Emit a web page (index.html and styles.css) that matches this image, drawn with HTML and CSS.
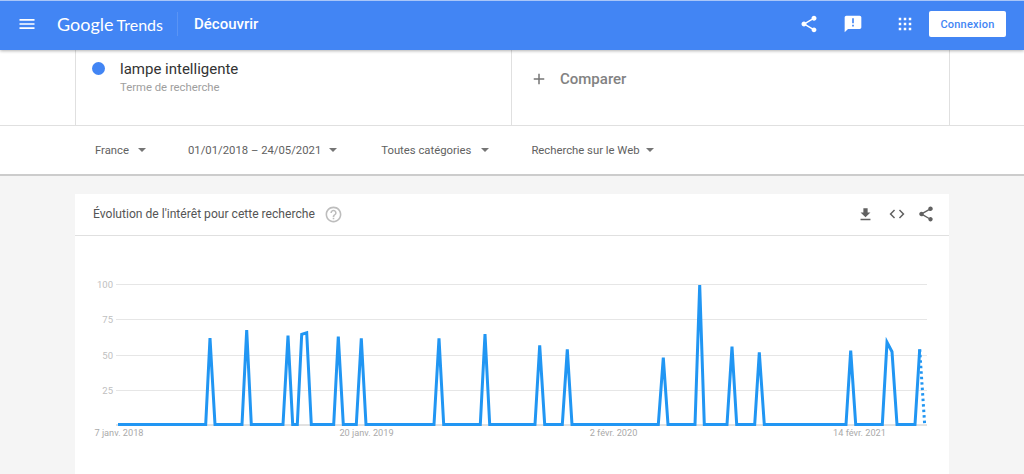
FILE: index.html
```html
<!DOCTYPE HTML>
<html>
<head>
<meta charset="utf-8">
<title>Google Trends</title>
<link rel="stylesheet" href="styles.css">
</head>
<body>

<div class="header">
  <svg class="menu-icon" viewBox="0 0 24 24"><path d="M3 18h18v-2H3v2zm0-5h18v-2H3v2zm0-7v2h18V6H3z"/></svg>
  <a href="#" class="logo"><span class="logo-google">Google</span><span class="logo-trends">Trends</span></a>
  <a href="#" class="page-name">Découvrir</a>
  <div class="header-right">
    <svg class="top-icon share" viewBox="0 0 24 24"><path d="M18 16.08c-.76 0-1.44.3-1.96.77L8.91 12.7c.05-.23.09-.46.09-.7s-.04-.47-.09-.7l7.05-4.11c.54.5 1.25.81 2.04.81 1.66 0 3-1.34 3-3s-1.34-3-3-3-3 1.34-3 3c0 .24.04.47.09.7L8.04 9.81C7.5 9.31 6.79 9 6 9c-1.66 0-3 1.34-3 3s1.34 3 3 3c.79 0 1.5-.31 2.04-.81l7.12 4.16c-.05.21-.08.43-.08.65 0 1.61 1.31 2.92 2.92 2.92 1.61 0 2.92-1.31 2.92-2.92s-1.31-2.92-2.92-2.92z"/></svg>
    <svg class="top-icon feedback" viewBox="0 0 24 24"><path d="M20 2H4c-1.1 0-1.99.9-1.99 2L2 22l4-4h14c1.1 0 2-.9 2-2V4c0-1.1-.9-2-2-2zm-7 9h-2V5h2v6zm0 4h-2v-2h2v2z"/></svg>
    <svg class="top-icon apps" viewBox="0 0 24 24"><path d="M4.5 4.5h3v3h-3zm6 0h3v3h-3zm6 0h3v3h-3zm-12 6h3v3h-3zm6 0h3v3h-3zm6 0h3v3h-3zm-12 6h3v3h-3zm6 0h3v3h-3zm6 0h3v3h-3z"/></svg>
    <button type="button" class="login-btn">Connexion</button>
  </div>
</div>

<div class="search-row">
  <div class="terms">
    <div class="term">
      <span class="dot"></span>
      <div>
        <div class="term-name">lampe intelligente</div>
        <div class="term-type">Terme de recherche</div>
      </div>
    </div>
    <div class="compare">
      <svg class="plus" viewBox="0 0 24 24"><path d="M19 13h-6v6h-2v-6H5v-2h6V5h2v6h6v2z"/></svg>
      <span>Comparer</span>
    </div>
  </div>
</div>

<div class="filters">
  <div class="filter filter-country">France<span class="caret"></span></div>
  <div class="filter filter-date">01/01/2018 – 24/05/2021<span class="caret"></span></div>
  <div class="filter filter-cat">Toutes catégories<span class="caret"></span></div>
  <div class="filter filter-web">Recherche sur le Web<span class="caret"></span></div>
</div>

<div class="content">
  <div class="card">
    <div class="card-head">
      <span class="card-title">Évolution de l'intérêt pour cette recherche</span>
      <svg class="help" viewBox="0 0 24 24"><path d="M11 18h2v-2h-2v2zm1-16C6.48 2 2 6.48 2 12s4.48 10 10 10 10-4.48 10-10S17.52 2 12 2zm0 18c-4.41 0-8-3.59-8-8s3.59-8 8-8 8 3.59 8 8-3.59 8-8 8zm0-14c-2.21 0-4 1.79-4 4h2c0-1.1.9-2 2-2s2 .9 2 2c0 2-3 1.75-3 5h2c0-2.25 3-2.5 3-5 0-2.21-1.79-4-4-4z"/></svg>
      <div class="card-tools">
        <svg class="tool tool-dl" viewBox="0 0 24 24"><path d="M19 9h-4V3H9v6H5l7 7 7-7zM5 18v2h14v-2H5z"/></svg>
        <svg class="tool tool-code" viewBox="0 0 24 24"><path d="M9.4 16.6L4.8 12l4.6-4.6L8 6l-6 6 6 6 1.4-1.4zm5.2 0l4.6-4.6-4.6-4.6L16 6l6 6-6 6-1.4-1.4z"/></svg>
        <svg class="tool tool-share" viewBox="0 0 24 24"><path d="M18 16.08c-.76 0-1.44.3-1.96.77L8.91 12.7c.05-.23.09-.46.09-.7s-.04-.47-.09-.7l7.05-4.11c.54.5 1.25.81 2.04.81 1.66 0 3-1.34 3-3s-1.34-3-3-3-3 1.34-3 3c0 .24.04.47.09.7L8.04 9.81C7.5 9.31 6.79 9 6 9c-1.66 0-3 1.34-3 3s1.34 3 3 3c.79 0 1.5-.31 2.04-.81l7.12 4.16c-.05.21-.08.43-.08.65 0 1.61 1.31 2.92 2.92 2.92 1.61 0 2.92-1.31 2.92-2.92s-1.31-2.92-2.92-2.92z"/></svg>
      </div>
    </div>
    <svg class="chart" viewBox="75 236 874 238">
      <g class="grid">
        <line x1="116" x2="927" y1="284.5" y2="284.5"/>
        <line x1="116" x2="927" y1="319.5" y2="319.5"/>
        <line x1="116" x2="927" y1="355.5" y2="355.5"/>
        <line x1="116" x2="927" y1="390.5" y2="390.5"/>
      </g>
      <line class="axis" x1="116" x2="927" y1="425" y2="425"/>
      <g class="y-labels">
        <text x="113" y="288">100</text>
        <text x="113" y="323">75</text>
        <text x="113" y="359">50</text>
        <text x="113" y="394">25</text>
      </g>
      <g class="x-labels">
        <text x="119" y="436">7 janv. 2018</text>
        <text x="366.5" y="436">20 janv. 2019</text>
        <text x="613.5" y="436">2 févr. 2020</text>
        <text x="859.5" y="436">14 févr. 2021</text>
      </g>
      <polyline class="trend" points="118,424.5 205.7,424.5 210,338 215,424.5 242,424.5 246.7,330 251.3,424.5 283,424.5 288,335.7 292.7,424.5 297.3,424.5 301.7,334.3 306.7,332.7 311.3,424.5 333.7,424.5 338.3,336.7 343.3,424.5 356.3,424.5 361.3,338.3 366,424.5 434,424.5 439,338.3 443.7,424.5 480.3,424.5 485,334 489.7,424.5 535,424.5 539.7,345.3 544.7,424.5 562.3,424.5 567.3,349.3 572,424.5 658.3,424.5 663.3,357.7 668,424.5 695,424.5 699.7,285 704.3,424.5 727,424.5 732,346.7 736.7,424.5 754.7,424.5 759.3,352.3 764.3,424.5 846,424.5 850.7,350.7 855.7,424.5 882.3,424.5 887,342.3 892,351.7 897,424.5 915,424.5 919.7,349.3"/>
      <line class="trend-partial" x1="919.7" y1="349.3" x2="924.7" y2="425"/>
    </svg>
  </div>
</div>

</body>
</html>
```

FILE: styles.css
```css
* {
  box-sizing: border-box;
  font-family: Roboto, "Liberation Sans", sans-serif;
}
html, body {
  height: 474px;
  overflow: hidden;
}
body {
  margin: 0;
  background-color: #f5f5f5;
}
a {
  text-decoration: none;
  color: white;
}

.header {
  display: flex;
  align-items: center;
  height: 50px;
  background-color: #4285f4;
  border-top: 1px solid #a9c6f8;
  box-shadow: 0 1px 3px rgba(0, 0, 0, 0.3);
  position: relative;
  padding: 0 18px 3px 17px;
  color: white;
}
.menu-icon {
  width: 20px;
  height: 20px;
  fill: white;
}
.logo {
  margin-left: 20px;
  padding-right: 14px;
  height: 24px;
  line-height: 24px;
  white-space: nowrap;
  border-right: 1px solid #5a94f5;
}
.logo-google {
  font-family: Lato, sans-serif;
  font-size: 18px;
}
.logo-trends {
  margin-left: 3px;
  font-family: Lato, sans-serif;
  font-size: 16px;
}
.page-name {
  margin-left: 16px;
  font-size: 15px;
  font-weight: 500;
}
.header-right {
  display: flex;
  align-items: center;
  margin-left: auto;
}
.top-icon {
  width: 20px;
  height: 20px;
  fill: white;
}
.feedback {
  margin-left: 24px;
}
.apps {
  margin-left: 32px;
}
.login-btn {
  margin-left: 14px;
  width: 77px;
  height: 26px;
  padding: 0;
  border: none;
  border-radius: 2px;
  background: white;
  color: #4285f4;
  font-size: 11px;
  font-weight: 500;
  letter-spacing: 0.2px;
}

.search-row {
  background: white;
  padding: 0 74px 0 75px;
  border-bottom: 1px solid #e0e0e0;
}
.terms {
  display: grid;
  grid-template-columns: 436px 1fr;
  height: 75px;
  border-left: 1px solid #e0e0e0;
  border-right: 1px solid #e0e0e0;
}
.term {
  display: flex;
  gap: 15px;
  padding: 10px 0 0 16px;
  border-right: 1px solid #e0e0e0;
}
.dot {
  width: 13px;
  height: 13px;
  margin-top: 2px;
  border-radius: 50%;
  background: #4285f4;
}
.term-name {
  font-size: 15px;
  line-height: 18px;
  color: #333;
}
.term-type {
  margin-top: 3px;
  font-size: 11.3px;
  line-height: 14px;
  color: #9e9e9e;
}
.compare {
  display: flex;
  align-items: center;
  gap: 12px;
  padding: 0 0 18px 18px;
  font-size: 15px;
  font-weight: 500;
  color: #828282;
}
.plus {
  width: 18px;
  height: 18px;
  fill: #757575;
}

.filters {
  display: flex;
  align-items: center;
  height: 50px;
  padding-left: 95px;
  background: white;
  border-bottom: 2px solid #ccc;
  font-size: 11.3px;
  color: #616161;
}
.filter {
  display: flex;
  align-items: center;
}
.caret {
  margin-left: 9px;
  border-top: 4px solid #757575;
  border-left: 4px solid transparent;
  border-right: 4px solid transparent;
}
.filter-date { margin-left: 42px; }
.filter-date .caret { margin-left: 8px; }
.filter-cat { margin-left: 44px; }
.filter-cat .caret { margin-left: 10px; }
.filter-web { margin-left: 42px; }
.filter-web .caret { margin-left: 6px; }

.content {
  padding: 18px 75px 0 75px;
}
.card {
  background: white;
}
.card-head {
  display: flex;
  align-items: center;
  height: 42px;
  padding: 0 14px 1px 18px;
  border-bottom: 1px solid #e0e0e0;
}
.card-title {
  font-size: 12.1px;
  color: #555;
}
.help {
  width: 19px;
  height: 19px;
  margin-left: 9px;
  fill: #bdbdbd;
}
.card-tools {
  display: flex;
  align-items: center;
  gap: 11px;
  margin-left: auto;
}
.tool {
  width: 18px;
  height: 18px;
  fill: #616161;
}
.tool-dl {
  width: 17px;
  height: 17px;
  margin-right: 3px;
}
.chart {
  display: block;
  width: 874px;
  height: 238px;
}
.grid line {
  stroke: #e6e6e6;
  stroke-width: 1;
}
.axis {
  stroke: #c4c4c4;
  stroke-width: 1;
}
.y-labels text {
  font-size: 9.5px;
  fill: #c0c0c0;
  text-anchor: end;
}
.x-labels text {
  font-size: 9.2px;
  fill: #aaa;
  text-anchor: middle;
}
.trend, .trend-partial {
  fill: none;
  stroke: #2196f3;
  stroke-width: 3;
  stroke-linejoin: miter;
}
.trend-partial {
  stroke-dasharray: 2.5 3;
}
```
